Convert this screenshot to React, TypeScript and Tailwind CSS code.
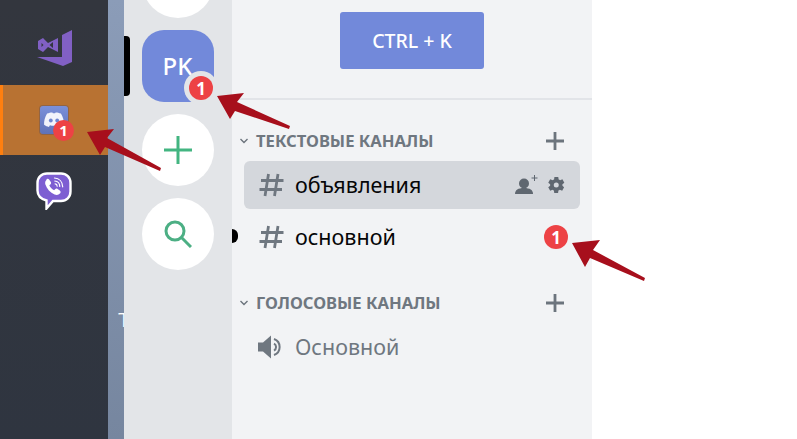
import React from "react";

function Hash() {
  return (
    <svg width="25" height="24" viewBox="0 0 25 24" fill="none" stroke="#6f7780" strokeWidth="2.8" className="shrink-0">
      <path d="M9.500 1 6 23M19 1 15.500 23M2 7.500h22.500M0.500 16.500h22.500" />
    </svg>
  );
}

function Plus() {
  return (
    <svg width="20" height="20" viewBox="0 0 20 20" stroke="#6c747d" strokeWidth="2.8" className="shrink-0">
      <path d="M10 1v18M1 10h18" />
    </svg>
  );
}

function Chevron() {
  return (
    <svg width="10" height="8" viewBox="0 0 10 8" fill="none" stroke="#6c747d" strokeWidth="1.4" className="shrink-0">
      <path d="M1.500 2 5 5.500 8.500 2" />
    </svg>
  );
}

function Badge({ className }: { className: string }) {
  return (
    <div className={"flex items-center justify-center rounded-full bg-[#ed4245] font-bold text-white " + className}>1</div>
  );
}

function Header({ title, className }: { title: string; className: string }) {
  return (
    <div className={"flex items-center pl-[7px] pr-[27px] " + className}>
      <Chevron />
      <span className="ml-[7px] flex-1 text-[16.6px] font-bold text-[#6f7780]">{title}</span>
      <Plus />
    </div>
  );
}

export default function App() {
  return (
    <div className="relative flex h-[439px] w-[797px] overflow-hidden bg-white font-['Noto_Sans','Open_Sans',sans-serif]">
      {/* Taskbar */}
      <div className="flex h-full w-[108px] shrink-0 flex-col bg-gradient-to-b from-[#33363e] to-[#2f3540] pt-[30px]">
        <div className="flex justify-center pl-[1px]">
          <svg width="36" height="36" viewBox="0 0 36 36" fill="#8160c4">
            <path d="M35 0 25 5V27H0L26 36 35 32Z" />
            <path fillRule="evenodd" d="M1 11 6 8 11 13 21 8V22L11 17 6 22 1 19ZM4.500 13V17L6.500 15ZM16 12V18L12.500 15Z" />
          </svg>
        </div>
        <div className="mt-[19px] flex h-[70px] items-center justify-center border-l-[3px] border-[#ff7f0f] bg-[#b87232] pr-[3px]">
          <div className="relative h-[28px] w-[28px] rounded-[3px] bg-gradient-to-b from-[#7a90da] to-[#5f72b8] shadow-[0_0_0_1px_rgba(60,70,110,0.3)]">
            <svg width="22" height="16" viewBox="0 0 20 15" className="absolute left-[3px] top-[6px]">
              <path d="M3.500 1.500C6 .4 8 .2 8.500.5L9 1.200c.7-.1 1.300-.1 2 0l.5-.7c.8-.2 2.800.1 5 1 2 3.500 3 7 2.800 10.500-1.500 1.200-3 1.700-4.500 2l-1-1.600c-2.500.7-5 .7-7.600 0l-1 1.600c-1.500-.3-3-.8-4.500-2C.5 8.500 1.500 5 3.500 1.500Z" fill="#f1f3fb" />
              <circle cx="7" cy="8" r="1.800" fill="#6f86d0" />
              <circle cx="13" cy="8" r="1.800" fill="#6f86d0" />
            </svg>
            <Badge className="absolute left-[13px] top-[14px] h-[21px] w-[21px] bg-[#e95455] text-[15px] leading-none" />
          </div>
        </div>
        <div className="flex justify-center pt-[17px]">
          <svg width="36" height="38" viewBox="0 0 36 38">
            <path d="M11 1.500h14c5.500 0 9.500 4 9.500 9.500v8.500c0 5.500-4 9.500-9.500 9.500h-8l-6.500 7.500V28.500C5 27 1.500 24 1.500 18.500V11c0-5.500 4-9.500 9.500-9.500Z" fill="#7d5ed2" stroke="#fff" strokeWidth="2.400" />
            <path d="M10 7.500c1-1 2.500-.9 3.300.2l1.500 2.300c.6.900.3 1.800-.5 2.400l-1 .9c.8 2 2.500 3.900 4.800 5l1-1.100c.7-.8 1.600-.9 2.500-.3l2.200 1.500c1.100.9 1.100 2.200.1 3.200-1.300 1.400-3.200 1.700-5.300.9-4.300-1.800-7.800-5.400-9.300-10.200-.4-1.900 0-3.700 1.700-4.800Z" fill="#fff" />
            <path d="M18.500 6c4.700.3 8 3.600 8.200 8.800M18.800 9c2.900.2 4.800 2.300 5 5.400M19.100 11.900c1.200.1 2 .9 2.100 2.300" fill="none" stroke="#fff" strokeWidth="1.200" strokeLinecap="round" />
          </svg>
        </div>
      </div>

      {/* Wallpaper strip */}
      <div className="relative h-full w-[16px] shrink-0 overflow-hidden bg-gradient-to-b from-[#8b9cb8] to-[#76869f]">
        <span className="absolute left-[10px] top-[309px] font-['Liberation_Sans',sans-serif] text-[20px] leading-[23px] text-white [text-shadow:1px_0_0_#222]">T</span>
      </div>

      {/* Server column */}
      <div className="flex h-full w-[108px] shrink-0 flex-col items-center gap-3 bg-[#e3e5e8]">
        <div className="-mt-[54px] h-[72px] w-[72px] shrink-0 rounded-full bg-white" />
        <div className="relative flex h-[72px] w-[72px] shrink-0 items-center justify-center rounded-[22px] bg-[#7289da] text-[24px] font-medium text-white">
          <span className="-mt-[1px] mr-[1px]">PK</span>
          <div className="absolute left-[42px] top-[41px] flex h-[34px] w-[34px] items-center justify-center rounded-full bg-[#e3e5e8]">
            <Badge className="h-[24px] w-[24px] text-[17px] leading-none" />
          </div>
        </div>
        <div className="flex h-[72px] w-[72px] shrink-0 items-center justify-center rounded-full bg-white">
          <svg width="28" height="28" viewBox="0 0 28 28" stroke="#43b581" strokeWidth="3">
            <path d="M14 0v28M0 14h28" />
          </svg>
        </div>
        <div className="flex h-[72px] w-[72px] shrink-0 items-center justify-center rounded-full bg-white">
          <svg width="28" height="28" viewBox="0 0 28 28" fill="none" stroke="#4caf84" strokeWidth="3">
            <circle cx="11" cy="11" r="9" />
            <path d="M17.500 17.500 27 27" />
          </svg>
        </div>
      </div>

      {/* Channels */}
      <div className="flex h-full w-[360px] shrink-0 flex-col bg-[#f2f3f5]">
        <div className="flex h-[100px] shrink-0 justify-center border-b-2 border-[#e2e4e8] pt-[12px]">
          <div className="flex h-[57px] w-[144px] items-center justify-center rounded-[3px] bg-[#7289da] text-[19.5px] font-medium text-white">
            CTRL + K
          </div>
        </div>
        <Header title="ТЕКСТОВЫЕ КАНАЛЫ" className="mt-[29px] h-[24px]" />
        <div className="mx-[12px] mt-[8px] flex h-[48px] items-center rounded-[6px] bg-[#d4d7dc] pl-[15px] pr-[14px]">
          <Hash />
          <span className="ml-[11px] flex-1 text-[21.5px] text-[#060607]">объявления</span>
          <svg width="24" height="20" viewBox="0 0 24 20" className="mr-[7px] shrink-0" fill="#5f6770">
            <circle cx="9" cy="8.500" r="5" />
            <path d="M0 19c0-4 3-6 9-6s9 2 9 6Z" />
            <path d="M19.500 0v6M16.500 3h6" stroke="#5f6770" strokeWidth="1" />
          </svg>
          <svg width="20" height="20" viewBox="0 0 24 24" fill="#5f6770" className="shrink-0">
            <path fillRule="evenodd" d="M19.700 13a7.800 7.800 0 0 0 0-2l2.300-1.800-2.300-4-2.800 1.100a8 8 0 0 0-1.700-1L14.700 2.300h-4.600l-.4 3a8 8 0 0 0-1.700 1L5 5.200l-2.300 4L5 11a7.800 7.800 0 0 0 0 2l-2.300 1.800 2.300 4 2.800-1.100c.5.400 1.100.7 1.700 1l.4 3h4.600l.4-3c.6-.3 1.200-.6 1.700-1l2.800 1.100 2.300-4ZM12.300 15a3 3 0 1 1 0-6 3 3 0 0 1 0 6Z" />
          </svg>
        </div>
        <div className="mx-[12px] mt-[4px] flex h-[48px] items-center pl-[15px] pr-[12px]">
          <Hash />
          <span className="ml-[11px] flex-1 text-[21.5px] text-[#060607]">основной</span>
          <Badge className="h-[24px] w-[24px] text-[17px] leading-none" />
        </div>
        <Header title="ГОЛОСОВЫЕ КАНАЛЫ" className="mt-[30px] h-[24px]" />
        <div className="mx-[12px] mt-[8px] flex h-[48px] items-center pl-[14px]">
          <svg width="25" height="24" viewBox="0 0 25 24" fill="#6f7780" className="shrink-0">
            <path d="M0 7.500h5L13 .5v23l-8-7H0Z" />
            <path d="M16 8.500a4 4 0 0 1 0 7M16 4a8.500 8.500 0 0 1 0 16" fill="none" stroke="#6f7780" strokeWidth="2" />
          </svg>
          <span className="ml-[12px] text-[21.5px] text-[#6f7780]">Основной</span>
        </div>
      </div>

      {/* Overlays on the screenshot */}
      <div className="absolute left-[124px] top-[36px] h-[60px] w-[6px] rounded-r-[4px] bg-black" />
      <div className="absolute left-[232px] top-[229px] h-[14px] w-[6px] rounded-r-full bg-black" />

      <svg width="797" height="439" viewBox="0 0 797 439" className="pointer-events-none absolute left-0 top-0" fill="#a70f1c">
        <path d="M87 132 114 129 107 138 161 168 160 171 105 147 100 155Z" />
        <path d="M217 96 244 93 237 102 290 126 289 129 235 111 230 119Z" />
        <path d="M572 243 600 240 593 250 645 278 644 281 590 258 585 267Z" />
      </svg>
    </div>
  );
}
